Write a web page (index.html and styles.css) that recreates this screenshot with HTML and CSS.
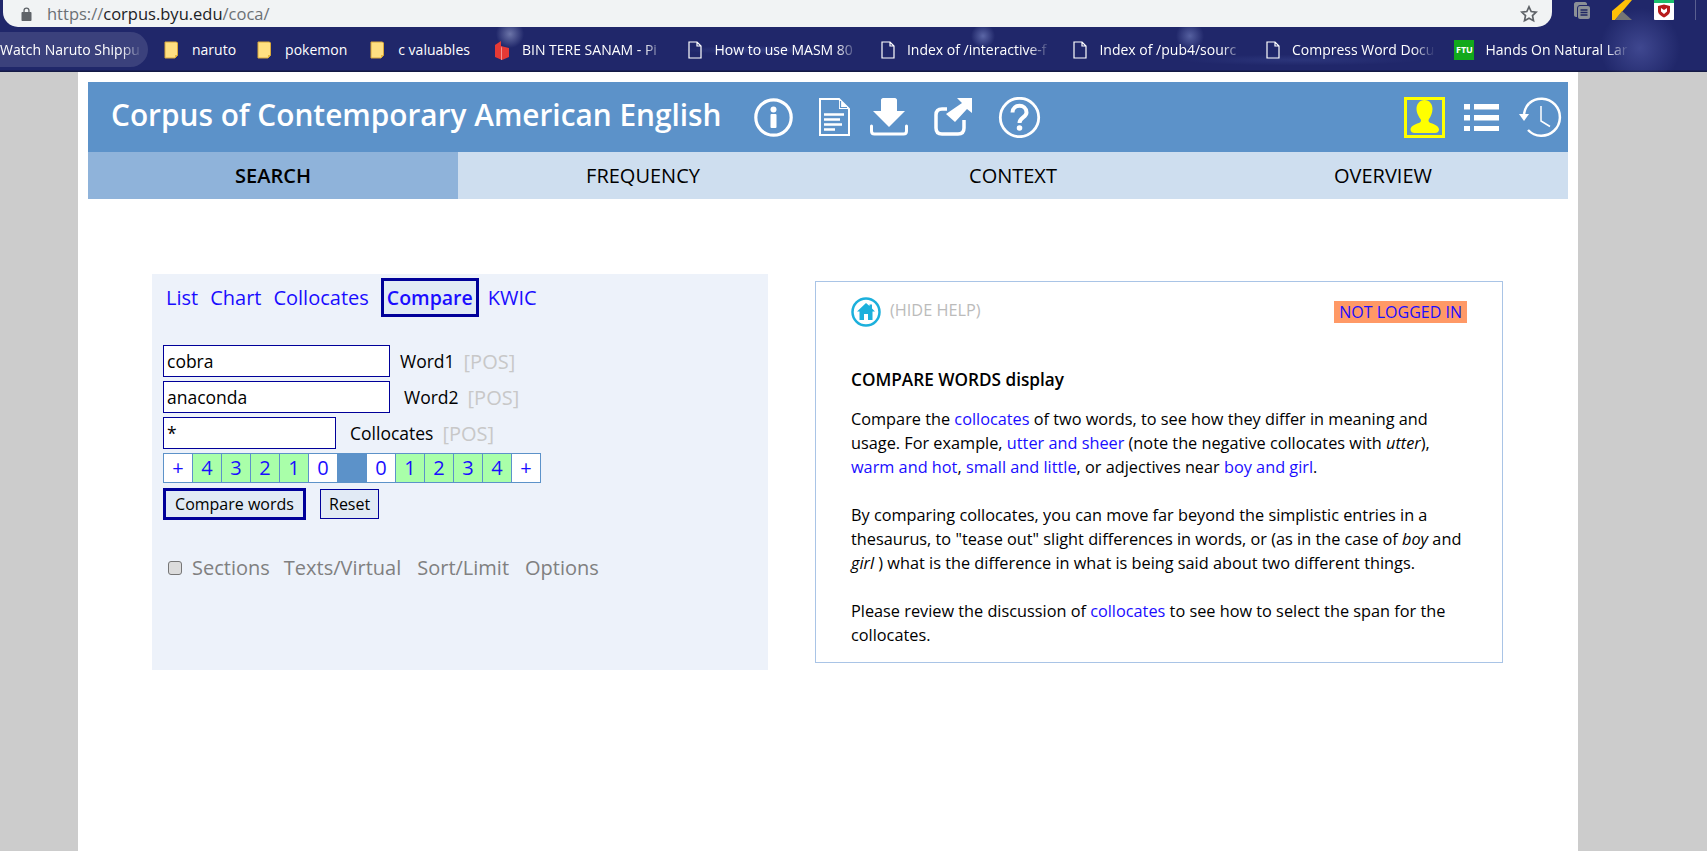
FILE: index.html
```html
<!DOCTYPE html>
<html lang="en">
<head>
<meta charset="UTF-8">
<title>Corpus of Contemporary American English</title>
<link rel="stylesheet" href="styles.css">
</head>
<body>

<div class="chrome">
    <div class="toolbar">
        <div class="address">
            <svg class="lock" width="11" height="14" viewBox="0 0 11 14"><path fill="#5f6368" d="M1.5 5H2.4V3.6a3.1 3.1 0 0 1 6.2 0V5h.9c.6 0 1 .4 1 1v7c0 .6-.4 1-1 1h-8c-.6 0-1-.4-1-1V6c0-.6.4-1 1-1zM3.700 5h3.600V3.600a1.800 1.800 0 0 0-3.600 0z"/></svg>
            <span class="url"><span class="url-dim">https://</span>corpus.byu.edu<span class="url-dim">/coca/</span></span>
            <svg class="star" width="18" height="18" viewBox="0 0 18 18"><path fill="none" stroke="#5f6368" stroke-width="1.700" d="M9 1.800l2.200 4.700 5 .6-3.700 3.500 1 5.100L9 13.200l-4.500 2.500 1-5.100L1.800 7.100l5-.6z"/></svg>
        </div>
        <div class="extensions">
            <svg width="18" height="20" viewBox="0 0 18 20"><path fill="#8b9096" d="M3 2h9c1 0 2 1 2 2v1H7C5.500 5 4 6.500 4 8v9H3c-1 0-2-1-2-2V4c0-1 1-2 2-2z"/><rect x="5" y="6" width="12" height="13" rx="2" fill="#8b9096"/><path stroke="#1f2663" stroke-width="1.300" d="M7.500 10h7M7.500 12.500h7M7.500 15h7"/></svg>
            <svg width="21" height="20" viewBox="0 0 21 20"><path fill="#ffc107" d="M13 0h7L3 20H0V11z"/><path fill="#757575" d="M10 11l10 9H3z"/></svg>
            <svg width="20" height="20" viewBox="0 0 20 20"><rect width="20" height="20" rx="1" fill="#fff"/><rect width="20" height="3" fill="#1bbf6b"/><path fill="#b71c1c" d="M4 6l6-1.500L16 6v5c0 3-3 5-6 6.500C7 16 4 14 4 11z"/><path fill="#fff" d="M7 8l3 2 3-2v3.500l-3 2.500-3-2.500z"/></svg>
            <span class="toolbar-sep"></span>
        </div>
    </div>
    <div class="bookmarks">
        <span class="bm bm-first"><span class="bm-text">Watch Naruto Shippu</span></span>
        <span class="bm bm-tight"><svg class="folder" width="16" height="18" viewBox="0 0 16 18"><path fill="#ffe082" stroke="#d9a93a" d="M1 1h11.500l1 1v12l-2.500 3H1z"/><path fill="#e8b93f" d="M11 17v-3h3z"/></svg><span>naruto</span></span>
        <span class="bm"><svg class="folder" width="16" height="18" viewBox="0 0 16 18"><path fill="#ffe082" stroke="#d9a93a" d="M1 1h11.500l1 1v12l-2.500 3H1z"/><path fill="#e8b93f" d="M11 17v-3h3z"/></svg><span>pokemon</span></span>
        <span class="bm bm-wide"><svg class="folder" width="16" height="18" viewBox="0 0 16 18"><path fill="#ffe082" stroke="#d9a93a" d="M1 1h11.500l1 1v12l-2.500 3H1z"/><path fill="#e8b93f" d="M11 17v-3h3z"/></svg><span>c valuables</span></span>
        <span class="bm"><svg width="15" height="20" viewBox="0 0 15 20"><path fill="#e53935" d="M0 5l6-4v5l8 2v9l-7 3-7-3z"/><path fill="#fff" fill-opacity=".45" d="M6 6v14l1 0V8z"/></svg><span class="bm-text">BIN TERE SANAM - Pi</span></span>
        <span class="bm"><svg class="page-icon" width="14" height="18" viewBox="0 0 14 18"><path fill="none" stroke="#fff" stroke-width="1.200" d="M1 1h8l4 4v12H1zM9 1v4h4"/></svg><span class="bm-text">How to use MASM 80</span></span>
        <span class="bm"><svg class="page-icon" width="14" height="18" viewBox="0 0 14 18"><path fill="none" stroke="#fff" stroke-width="1.200" d="M1 1h8l4 4v12H1zM9 1v4h4"/></svg><span class="bm-text">Index of /interactive-f</span></span>
        <span class="bm"><svg class="page-icon" width="14" height="18" viewBox="0 0 14 18"><path fill="none" stroke="#fff" stroke-width="1.200" d="M1 1h8l4 4v12H1zM9 1v4h4"/></svg><span class="bm-text">Index of /pub4/sourc</span></span>
        <span class="bm"><svg class="page-icon" width="14" height="18" viewBox="0 0 14 18"><path fill="none" stroke="#fff" stroke-width="1.200" d="M1 1h8l4 4v12H1zM9 1v4h4"/></svg><span class="bm-text">Compress Word Docu</span></span>
        <span class="bm bm-last"><span class="ftu">FTU</span><span class="bm-text">Hands On Natural Lar</span></span>
    </div>
</div>

<div class="page">
    <div class="title-bar">
        <h1>Corpus of Contemporary American English</h1>
        <svg class="ic-info" width="39" height="39" viewBox="0 0 39 39"><circle cx="19.500" cy="19.500" r="17.700" fill="none" stroke="#fff" stroke-width="3.200"/><circle cx="19.500" cy="11.500" r="3" fill="#fff"/><rect x="16.500" y="16" width="6" height="14" rx="1" fill="#fff"/></svg>
        <svg class="ic-doc" width="31" height="38" viewBox="0 0 31 38"><path fill="none" stroke="#fff" stroke-width="2" d="M1 1h19l10 10v26H1z"/><path fill="#fff" d="M20 1l10 10H20z"/><path fill="none" stroke="#5c92c9" stroke-width="1.200" d="M21.500 3v6.500H28"/><path stroke="#fff" stroke-width="2.400" d="M5 16.500h20M5 21.500h16M5 26.500h18M5 31.500h11"/></svg>
        <svg class="ic-down" width="38" height="38" viewBox="0 0 38 38"><path fill="#fff" d="M13 0h12c1 0 2 1 2 2v11h8L19 29 3 13h8V2c0-1 1-2 2-2z"/><path fill="none" stroke="#fff" stroke-width="3" stroke-linecap="round" d="M1.500 28v5c0 2 1 3 3 3h29c2 0 3-1 3-3v-5"/></svg>
        <svg class="ic-share" width="38" height="38" viewBox="0 0 38 38"><path fill="none" stroke="#fff" stroke-width="3.500" d="M13 11H8c-4 0-6 2-6 6v13c0 4 2 6 6 6h16c4 0 6-2 6-6v-8"/><path fill="#fff" d="M23 0h15v15l-5-4-12 13-9-8L28 5z"/></svg>
        <svg class="ic-help" width="43" height="41" viewBox="0 0 43 41"><circle cx="21.500" cy="20.500" r="19.200" fill="none" stroke="#fff" stroke-width="2.800"/><path fill="none" stroke="#fff" stroke-width="4" d="M14.500 15.500c0-9 14-9 14 0 0 5-7 5-7 10.500"/><circle cx="21.500" cy="31" r="2.800" fill="#fff"/></svg>
        <span class="user-box">
            <svg width="35" height="35" viewBox="0 0 35 35"><path fill="#ffff00" d="M17.500 0c5 0 8 4 8 9 0 4-2 8-3.500 10-1 1.500-.5 3 1.500 4 5 1.500 8.500 3.500 8.500 6.500 0 2.500-2 3.500-4 3.500H7.500c-2 0-4-1-4-3.500 0-3 3.500-5 8.500-6.500 2-1 2.500-2.500 1.500-4C12 17 9.500 13 9.500 9c0-5 3-9 8-9z"/></svg>
        </span>
        <svg class="ic-list" width="35" height="27" viewBox="0 0 35 27"><path fill="#fff" d="M0 0h6v5.500H0zM10 0h25v5.500H10zM0 11h6v5.500H0zM10 11h25v5.500H10zM0 22h6v5H0zM10 22h25v5H10z"/></svg>
        <svg class="ic-clock" width="43" height="40" viewBox="0 0 43 40"><path fill="none" stroke="#fff" stroke-width="2.500" d="M10 6.500A18.500 18.500 0 1 1 9 33"/><path fill="none" stroke="#fff" stroke-width="2.500" d="M10 6.500C7 9.500 5.500 13 5 17"/><path fill="#fff" d="M0 17h10l-5 7z"/><path fill="none" stroke="#fff" stroke-width="1.500" d="M22 9v15l9 5.500"/></svg>
    </div>
    <nav class="main-tabs">
        <a class="main-tab active">SEARCH</a>
        <a class="main-tab">FREQUENCY</a>
        <a class="main-tab">CONTEXT</a>
        <a class="main-tab">OVERVIEW</a>
    </nav>

    <div class="content">
        <div class="panel">
            <div class="display-tabs">
                <a>List</a>
                <a>Chart</a>
                <a>Collocates</a>
                <a class="selected">Compare</a>
                <a class="kwic">KWIC</a>
            </div>

            <form class="search-form">
                <div class="row">
                    <input class="word" type="text" value="cobra">
                    <span class="lbl first">Word1</span><span class="pos">[POS]</span>
                </div>
                <div class="row">
                    <input class="word" type="text" value="anaconda">
                    <span class="lbl">Word2</span><span class="pos">[POS]</span>
                </div>
                <div class="row">
                    <input class="word short" type="text" value="*">
                    <span class="lbl">Collocates</span><span class="pos">[POS]</span>
                </div>
                <div class="span-grid">
                    <span class="cell">+</span>
                    <span class="cell on">4</span>
                    <span class="cell on">3</span>
                    <span class="cell on">2</span>
                    <span class="cell on">1</span>
                    <span class="cell">0</span>
                    <span class="cell mid"></span>
                    <span class="cell">0</span>
                    <span class="cell on">1</span>
                    <span class="cell on">2</span>
                    <span class="cell on">3</span>
                    <span class="cell on">4</span>
                    <span class="cell">+</span>
                </div>
                <div class="buttons">
                    <button type="button" class="btn btn-main">Compare words</button>
                    <button type="button" class="btn">Reset</button>
                </div>
            </form>

            <div class="options">
                <input type="checkbox" disabled>
                <span class="sections">Sections</span>
                <span>Texts/Virtual</span>
                <span>Sort/Limit</span>
                <span>Options</span>
            </div>
        </div>

        <div class="help">
            <div class="help-top">
                <svg width="30" height="30" viewBox="0 0 30 30"><circle cx="15" cy="15" r="13.500" fill="#fff" stroke="#1cb0dc" stroke-width="2.500"/><path fill="#1cb0dc" d="M15 6l3.500 3V7.500h2.500V11.500l3 3h-2.500V23h-4.500v-6h-4v6H8.500v-8.500H6z"/></svg>
                <span class="hide-help">(HIDE HELP)</span>
                <span class="not-logged">NOT LOGGED IN</span>
            </div>
            <h3>COMPARE WORDS display</h3>
            <p>Compare the <a>collocates</a> of two words, to see how they differ in meaning and usage. For example, <a>utter and sheer</a> (note the negative collocates with <i>utter</i>), <a>warm and hot</a>, <a>small and little</a>, or adjectives near <a>boy and girl</a>.</p>
            <p>By comparing collocates, you can move far beyond the simplistic entries in a thesaurus, to "tease out" slight differences in words, or (as in the case of <i>boy</i> and <i>girl</i> ) what is the difference in what is being said about two different things.</p>
            <p>Please review the discussion of <a>collocates</a> to see how to select the span for the collocates.</p>
        </div>
    </div>
</div>

</body>
</html>
```

FILE: styles.css
```css
html, body {
    margin: 0;
    padding: 0;
    height: 100%;
    overflow: hidden;
}
body {
    background-color: #cccccc;
    font-family: "Open Sans", Arial, sans-serif;
    color: #000;
    display: flex;
    flex-direction: column;
}
a {
    color: #1a0dff;
}

/* browser chrome */
.chrome {
    height: 72px;
    flex: none;
    background-color: #20276a;
    background-image:
        radial-gradient(circle at 510px 34px, rgba(170, 180, 220, .55) 0, rgba(170, 180, 220, 0) 14px),
        radial-gradient(circle at 983px 36px, rgba(150, 165, 225, .5) 0, rgba(150, 165, 225, 0) 12px),
        radial-gradient(circle at 1190px 36px, rgba(150, 165, 225, .45) 0, rgba(150, 165, 225, 0) 14px),
        radial-gradient(circle at 1640px 48px, rgba(110, 120, 200, .4) 0, rgba(110, 120, 200, 0) 40px),
        radial-gradient(ellipse at 760px 50px, rgba(80, 95, 170, .4) 0, rgba(80, 95, 170, 0) 80px),
        radial-gradient(ellipse at 380px 80px, rgba(70, 85, 160, .35) 0, rgba(70, 85, 160, 0) 90px),
        radial-gradient(ellipse at 1300px 60px, rgba(70, 85, 160, .3) 0, rgba(70, 85, 160, 0) 120px),
        linear-gradient(to bottom, #20276a 70px, #141a45 71px);
    overflow: hidden;
}
.toolbar {
    height: 27px;
    display: flex;
}
.address {
    width: 1549px;
    margin-left: 3px;
    height: 27px;
    background-color: #f1f3f4;
    border-radius: 0 0 15px 15px;
    display: flex;
    align-items: center;
    flex: none;
}
.lock {
    margin-left: 18px;
}
.url {
    margin-left: 15px;
    font-size: 16.5px;
    color: #202124;
}
.url-dim {
    color: #6b7075;
}
.star {
    margin-left: auto;
    margin-right: 14px;
}
.extensions {
    display: flex;
    align-items: flex-start;
    margin-left: 21px;
    gap: 21px;
}
.toolbar-sep {
    width: 1px;
    height: 20px;
    background-color: #5a6090;
}
.bookmarks {
    height: 45px;
    display: flex;
    align-items: center;
    gap: 23px;
    font-size: 14px;
    color: #fff;
    white-space: nowrap;
}
.bm {
    display: flex;
    align-items: center;
    gap: 12px;
    flex: none;
}
.bm-first {
    width: 148px;
    height: 35px;
    margin-right: -7px;
    background-color: rgba(255, 255, 255, .12);
    border-radius: 0 18px 18px 0;
}
.bm-tight {
    margin-right: -2px;
}
.bm-wide {
    margin-right: 2px;
}
.bm-text {
    width: 143.5px;
    overflow: hidden;
    -webkit-mask-image: linear-gradient(to right, #000 85%, transparent);
    mask-image: linear-gradient(to right, #000 85%, transparent);
}
.bm-first .bm-text {
    width: 142px;
}
.bm-last {
    margin-left: -4px;
    gap: 11px;
}
.ftu {
    width: 20px;
    height: 20px;
    line-height: 20px;
    background-color: #12a81c;
    font-size: 9px;
    font-weight: 700;
    text-align: center;
}

/* page */
.page {
    flex: 1;
    width: 1480px;
    margin-left: 78px;
    padding: 10px 10px 0;
    background-color: #fff;
}
.title-bar {
    height: 70px;
    background-color: #5c92c9;
    display: flex;
    align-items: center;
    padding-left: 23px;
    padding-right: 6px;
}
.title-bar h1 {
    margin: -5px 32px 0 0;
    font-size: 29.8px;
    font-weight: 600;
    color: #fff;
    white-space: nowrap;
}
.ic-doc { margin-left: 26px; }
.ic-down { margin-left: 20px; }
.ic-share { margin-left: 26px; }
.ic-help { margin-left: 26px; }
.user-box {
    margin-left: auto;
    width: 35px;
    height: 35px;
    border: 3px solid #ffff00;
    display: block;
}
.user-box svg {
    display: block;
}
.ic-list { margin-left: 19px; }
.ic-clock { margin-left: 20px; }

.main-tabs {
    display: grid;
    grid-template-columns: repeat(4, 1fr);
    background-color: #cedeef;
}
.main-tab {
    height: 47px;
    line-height: 47px;
    text-align: center;
    font-size: 20px;
    color: #000;
}
.main-tab.active {
    background-color: #8fb3da;
    font-weight: 600;
}

.content {
    display: flex;
    align-items: flex-start;
    padding: 75px 0 0 64px;
    gap: 47px;
}

/* search panel */
.panel {
    width: 616px;
    height: 396px;
    flex: none;
    background-color: #edf2fa;
    box-sizing: border-box;
    padding-top: 4px;
}
.display-tabs {
    display: flex;
    align-items: center;
    gap: 12px;
    padding-left: 14px;
    height: 39px;
    font-size: 20px;
}
.display-tabs .selected {
    border: 3px solid #000099;
    padding: 0 3px;
    line-height: 33px;
    background-color: #e1eaf5;
    font-size: 19.5px;
    font-weight: 600;
}
.display-tabs .kwic {
    margin-left: -3px;
}
.search-form {
    margin: 28px 0 0 11px;
}
.row {
    display: flex;
    align-items: center;
    height: 32px;
    margin-bottom: 4px;
    font-size: 17.5px;
}
.word {
    width: 227px;
    height: 32px;
    box-sizing: border-box;
    border: 1px solid #000099;
    padding: 0 3px;
    font: 17.5px "Open Sans", Arial, sans-serif;
    color: #000;
    background-color: #fff;
}
.word.short {
    width: 173px;
}
.lbl {
    margin-left: 14px;
}
.lbl.first {
    margin-left: 10px;
}
.pos {
    margin-left: 9px;
    font-size: 20px;
    color: #c8c8c8;
}
.span-grid {
    display: grid;
    grid-template-columns: repeat(13, 1fr);
    gap: 1px;
    width: 378px;
    height: 30px;
    box-sizing: border-box;
    padding: 1px;
    background-color: #5c92c9;
}
.cell {
    background-color: #fff;
    color: #1a0dff;
    font-size: 20px;
    line-height: 28px;
    text-align: center;
}
.cell.on {
    background-color: #a9ffa9;
}
.cell.mid {
    background-color: #5c92c9;
}
.buttons {
    display: flex;
    align-items: center;
    gap: 14px;
    margin-top: 5px;
}
.btn {
    height: 30px;
    padding: 0 8px;
    border: 1px solid #000099;
    background-color: #e1eaf5;
    font: 16px "Open Sans", Arial, sans-serif;
    color: #000;
}
.btn-main {
    height: 32px;
    width: 143px;
    border-width: 3px;
    padding: 0;
}
.options {
    display: flex;
    align-items: center;
    gap: 16px;
    margin: 36px 0 0 16px;
    font-size: 20px;
    line-height: 24px;
    color: #808080;
}
.options input {
    appearance: none;
    box-sizing: border-box;
    width: 14px;
    height: 14px;
    margin: 0 -6px 0 0;
    border: 1px solid #767676;
    border-radius: 3px;
    background-color: #dcdcdc;
}
.options .sections {
    margin-right: -2px;
}

/* help box */
.help {
    width: 688px;
    height: 382px;
    margin-top: 7px;
    flex: none;
    box-sizing: border-box;
    border: 1px solid #a9c4e6;
    padding: 15px 35px 0;
    font-size: 16.3px;
    line-height: 24px;
    color: #000;
}
.help-top {
    display: flex;
    align-items: flex-start;
}
.hide-help {
    margin: 1px 0 0 9px;
    font-size: 16.3px;
    color: #bbbbbb;
}
.not-logged {
    margin: 4px 0 0 auto;
    height: 22px;
    line-height: 22px;
    padding: 0 5px;
    background-color: #ff9966;
    font-size: 16px;
    color: #1a0dff;
}
.help h3 {
    margin: 41px 0 15px;
    font-size: 17.2px;
    line-height: 24px;
    font-weight: 600;
}
.help p {
    margin: 0 0 24px;
}
```
